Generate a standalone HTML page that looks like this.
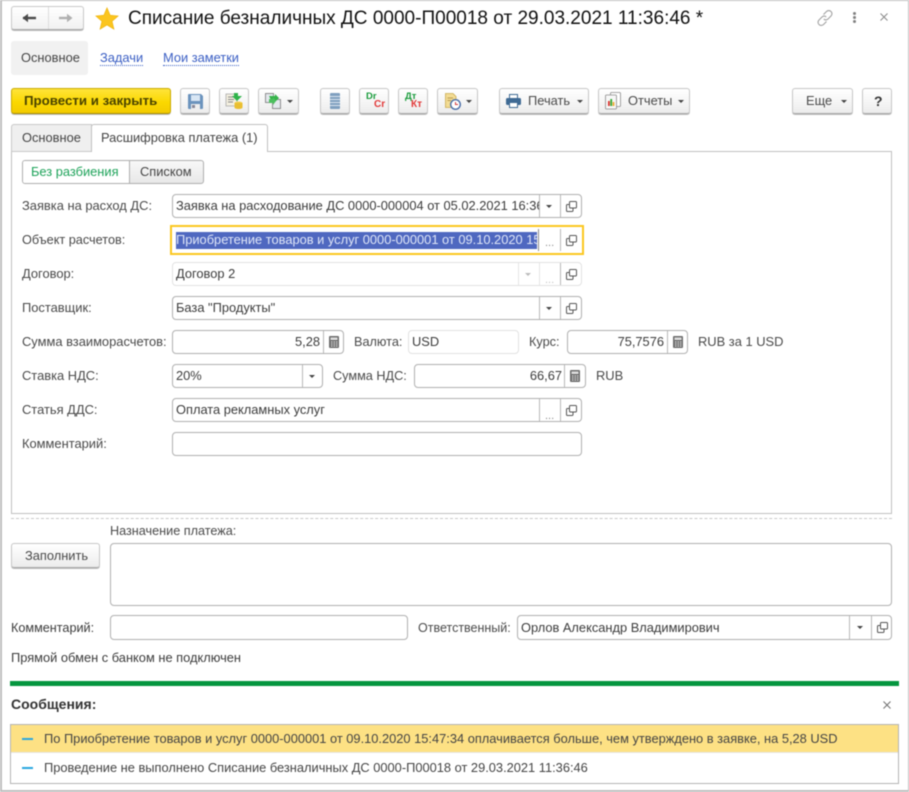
<!DOCTYPE html>
<html lang="ru"><head><meta charset="utf-8"><title>Списание</title>
<style>
*{box-sizing:border-box}
html,body{margin:0;padding:0;background:#fff}
body{width:909px;height:792px;position:relative;overflow:hidden;font:12.85px/16px "Liberation Sans",Arial,sans-serif;color:#3c3c3c;filter:blur(.4px)}
.a{position:absolute;white-space:nowrap}
.l{position:absolute;white-space:nowrap;color:#4a4a4a;height:16px;font-size:12.9px}
.btn{position:absolute;top:88px;height:26px;border:1px solid #c6c6c6;border-bottom:1px solid #a8a8a8;border-radius:3px;background:linear-gradient(#fff,#f4f4f4 60%,#ececec);box-shadow:0 1px 0 #bdbdbd}
.btn span.t{position:absolute;top:4px;white-space:nowrap;color:#4a4a4a}
.f{position:absolute;height:24px;border:1px solid #b0b0b0;border-radius:4px;background:#fff}
.f.dis{border-color:#e2e2e2}
.f .v{position:absolute;left:3px;top:3px;white-space:nowrap;overflow:hidden;color:#3c3c3c}
.f .r{left:auto;right:4px;text-align:right}
.d{position:absolute;top:0;bottom:0;width:1px;background:#b8b8b8}
.arr{position:absolute;width:0;height:0;border:3px solid transparent;border-top:3px solid #444;border-bottom:0}
.dots{position:absolute;color:#8a8a8a;font-size:11px;line-height:10px;letter-spacing:0}
svg{position:absolute;overflow:visible}
</style></head><body>

<!-- outer frame -->
<div class="a" style="left:0;top:0;width:909px;height:792px;border:1px solid #bfbfbf;border-left-width:2px;border-top-width:1px;border-bottom-width:2px"></div>

<!-- nav -->
<div class="a" style="left:11px;top:6px;width:73px;height:24px;border:1px solid #c8c8c8;border-bottom-color:#a8a8a8;border-radius:3px;background:linear-gradient(#fff,#f1f1f1);box-shadow:0 1px 0 #bbb"></div>
<div class="a" style="left:48px;top:7px;width:1px;height:22px;background:#ddd"></div>
<svg style="left:22px;top:13px" width="16" height="10"><path d="M1 5H14" stroke="#4a4a4a" stroke-width="2.4"/><path d="M0.5 5L6 0.8V9.2Z" fill="#4a4a4a"/></svg>
<svg style="left:58px;top:13px" width="16" height="10"><path d="M1 5H13" stroke="#b0b0b0" stroke-width="2.4"/><path d="M14.5 5L9 0.8V9.2Z" fill="#b0b0b0"/></svg>
<svg style="left:95px;top:7px" width="24" height="23" viewBox="0 0 24 23"><path d="M12 .8L15.2 8.2 23.2 9 17.1 14.3 19 22.2 12 18 5 22.2 6.9 14.3 .8 9 8.8 8.2Z" fill="#fbc51f" stroke="#eeb208" stroke-width=".6"/></svg>
<div class="a" style="left:128px;top:8px;font-size:19.03px;line-height:22px;color:#111">Списание безналичных ДС 0000-П00018 от 29.03.2021 11:36:46 *</div>

<!-- header right icons -->
<svg style="left:816px;top:9px" width="18" height="18" viewBox="0 0 18 18" fill="none" stroke="#a0a0a0" stroke-width="1.1"><path d="M7.5 5.5L10.5 2.5C11.7 1.3 13.7 1.2 15 2.5 16.3 3.8 16.2 5.8 15 7L12 10C10.8 11.2 8.8 11.2 7.8 10"/><path d="M10.5 12.5L7.5 15.5C6.3 16.7 4.3 16.8 3 15.5 1.7 14.2 1.8 12.2 3 11L6 8C7.2 6.8 9.2 6.8 10.2 8"/></svg>
<div class="a" style="left:853px;top:12px;width:3px;height:3px;background:#808080;border-radius:50%"></div>
<div class="a" style="left:853px;top:16px;width:3px;height:3px;background:#808080;border-radius:50%"></div>
<div class="a" style="left:853px;top:20px;width:3px;height:3px;background:#808080;border-radius:50%"></div>
<svg style="left:880px;top:13px" width="8" height="8"><path d="M.5 .5L7.5 7.5M7.5 .5L.5 7.5" stroke="#8a8a8a" stroke-width="1"/></svg>

<!-- section tabs -->
<div class="a" style="left:11px;top:41px;width:77px;height:34px;background:#f1f1f1;border-radius:3px"></div>
<div class="a" style="left:21px;top:50px;color:#444">Основное</div>
<div class="a" style="left:100px;top:50px;color:#3b5fc4;border-bottom:1px dotted #3b5fc4;line-height:15px">Задачи</div>
<div class="a" style="left:163px;top:50px;color:#3b5fc4;border-bottom:1px dotted #3b5fc4;line-height:15px">Мои заметки</div>

<!-- command bar -->
<div class="btn" style="left:11px;width:160px;background:linear-gradient(#ffe43a,#fbd800 55%,#f3cb00);border-color:#c9a900;border-bottom-color:#a88e00"><span class="t" style="left:12px;color:#4a4300;font-weight:bold;font-size:13.3px">Провести и закрыть</span></div>

<div class="btn" style="left:180px;width:30px"></div>
<svg style="left:188px;top:94px" width="15" height="15" viewBox="0 0 15 15"><path d="M0 1C0 .4.4 0 1 0H13L15 2V14C15 14.6 14.6 15 14 15H1C.4 15 0 14.6 0 14Z" fill="#6b93bd"/><rect x="3" y="1" width="9" height="6" fill="#d8e6f4"/><rect x="3" y="10" width="9" height="5" fill="#eee"/><rect x="4" y="11" width="3" height="3" fill="#889"/></svg>

<div class="btn" style="left:219px;width:30px"></div>
<svg style="left:226px;top:93px" width="17" height="16" viewBox="0 0 17 16"><rect x="0" y="1" width="11" height="12" fill="#f4f0e0" stroke="#aaa" stroke-width=".8"/><path d="M2 4H8M2 6.5H8M2 9H7" stroke="#888" stroke-width=".9"/><path d="M8 0H12V3H16L11 8 6 3H8Z" fill="#2fb34a"/><ellipse cx="12.5" cy="10" rx="4" ry="1.5" fill="#f3cf4a"/><path d="M8.5 10V14.5C8.5 15.3 10 16 12.5 16S16.5 15.3 16.5 14.5V10Z" fill="#eabf30"/></svg>

<div class="btn" style="left:258px;width:41px"></div>
<svg style="left:265px;top:93px" width="17" height="16" viewBox="0 0 17 16"><rect x=".5" y=".5" width="8" height="9" fill="#e4e8ee" stroke="#777" stroke-width=".8"/><rect x="7.5" y="6.5" width="8" height="9" fill="#e4e8ee" stroke="#777" stroke-width=".8"/><path d="M4 3L10 3 10 1 14 5 10 9 10 7 6 7Z" fill="#35b34a"/><path d="M4 6L8 6 8 4 11 8 8 12 8 10 4 10Z" fill="#4cc05e"/></svg>
<div class="arr" style="left:287px;top:100px"></div>

<div class="btn" style="left:320px;width:30px"></div>
<svg style="left:330px;top:93px" width="10" height="16" viewBox="0 0 10 16"><rect width="10" height="16" rx="1" fill="#7f9fbf"/><path d="M0 3.5H10M0 6.5H10M0 9.5H10M0 12.5H10" stroke="#dbe6f0" stroke-width=".9"/></svg>

<div class="btn" style="left:359px;width:30px"><span class="a" style="left:6px;top:3px;font-size:9.5px;line-height:10px;font-weight:bold;color:#1a9c3c">Dr</span><span class="a" style="left:14px;top:11px;font-size:10px;line-height:10px;font-weight:bold;color:#e23a3a">Cr</span></div>
<div class="btn" style="left:398px;width:30px"><span class="a" style="left:6px;top:3px;font-size:9.5px;line-height:10px;font-weight:bold;color:#1a9c3c">Дт</span><span class="a" style="left:12px;top:11px;font-size:10px;line-height:10px;font-weight:bold;color:#e23a3a">Кт</span></div>

<div class="btn" style="left:437px;width:41px"></div>
<svg style="left:445px;top:93px" width="16" height="17" viewBox="0 0 16 17"><path d="M.5 .5H8L11 3.5V14.5H.5Z" fill="#f3dc94" stroke="#c9aa50" stroke-width=".8"/><path d="M2.5 5H8M2.5 7.5H6" stroke="#b89a50" stroke-width=".9"/><circle cx="10.5" cy="11.5" r="4.8" fill="#fff" stroke="#4b6fa8" stroke-width="1.4"/><path d="M10.5 9V11.5H13" stroke="#d23a3a" stroke-width="1" fill="none"/></svg>
<div class="arr" style="left:466px;top:100px"></div>

<div class="btn" style="left:499px;width:90px"><span class="t" style="left:28px">Печать</span></div>
<svg style="left:506px;top:94px" width="15" height="14" viewBox="0 0 15 14"><rect x="3.5" y=".5" width="8" height="4" fill="#fff" stroke="#3f6a94"/><rect x="0" y="4" width="15" height="7" rx="1.5" fill="#3f6a94"/><rect x="3.5" y="8.5" width="8" height="5" fill="#fff" stroke="#3f6a94"/></svg>
<div class="arr" style="left:577px;top:100px"></div>

<div class="btn" style="left:598px;width:92px"><span class="t" style="left:29px">Отчеты</span></div>
<svg style="left:605px;top:92px" width="16" height="18" viewBox="0 0 16 18"><rect x="5.5" y=".5" width="10" height="14" rx="1" fill="#fff" stroke="#8a8a8a" stroke-width=".8"/><rect x=".5" y="3" width="11" height="14" rx="1" fill="#f7f7f7" stroke="#8a8a8a" stroke-width=".8"/><rect x="3" y="9" width="1.8" height="5" fill="#d33"/><rect x="5.3" y="7" width="1.8" height="7" fill="#3a3"/><rect x="7.6" y="10" width="1.8" height="4" fill="#ea3"/></svg>
<div class="arr" style="left:678px;top:100px"></div>

<div class="btn" style="left:792px;width:61px"><span class="t" style="left:13px">Еще</span></div>
<div class="arr" style="left:841px;top:100px"></div>
<div class="btn" style="left:862px;width:30px"><span class="t" style="left:11px;font-weight:bold;color:#333;font-size:14px">?</span></div>

<!-- form tabs -->
<div class="a" style="left:11px;top:151px;width:881px;height:363px;border:1px solid #c0c0c0"></div>
<div class="a" style="left:11px;top:124px;width:81px;height:28px;background:#efefef;border:1px solid #c8c8c8;border-radius:3px 0 0 0"></div>
<div class="a" style="left:22px;top:130px;color:#444">Основное</div>
<div class="a" style="left:91px;top:124px;width:177px;height:28px;background:#fff;border:1px solid #c0c0c0;border-bottom:0;border-radius:3px 3px 0 0"></div>
<div class="a" style="left:101px;top:130px;color:#444">Расшифровка платежа (1)</div>

<!-- toggle -->
<div class="a" style="left:22px;top:160px;width:182px;height:24px;border:1px solid #aeaeae;border-radius:3px;background:linear-gradient(#f8f8f8,#e8e8e8);overflow:hidden"><div class="a" style="left:0;top:0;width:107px;height:22px;background:#fff;border-right:1px solid #aeaeae"></div></div>
<div class="a" style="left:31px;top:164px;color:#1ea35a">Без разбиения</div>
<div class="a" style="left:140px;top:164px;color:#444">Списком</div>

<!-- labels -->
<div class="l" style="left:22px;top:198px">Заявка на расход ДС:</div>
<div class="l" style="left:22px;top:232px;font-size:12.7px">Объект расчетов:</div>
<div class="l" style="left:22px;top:266px">Договор:</div>
<div class="l" style="left:22px;top:300px">Поставщик:</div>
<div class="l" style="left:22px;top:334px">Сумма взаиморасчетов:</div>
<div class="l" style="left:22px;top:368px">Ставка НДС:</div>
<div class="l" style="left:22px;top:402px">Статья ДДС:</div>
<div class="l" style="left:22px;top:436px">Комментарий:</div>

<!-- row 1 -->
<div class="f" style="left:172px;top:194px;width:410px"><div class="v" style="width:363px;left:3px">Заявка на расходование ДС 0000-000004 от 05.02.2021 16:36:15</div><div class="d" style="left:366px"></div><div class="d" style="left:387px"></div></div>
<div class="arr" style="left:546px;top:205px"></div>
<svg style="left:566px;top:201px" width="11" height="11" viewBox="0 0 11 11" fill="none" stroke="#555" stroke-width="1"><rect x="3.5" y=".5" width="7" height="6.5" rx="1"/><path d="M3.5 3.5H1.5C.9 3.5.5 3.9.5 4.5V9.5C.5 10.1.9 10.5 1.5 10.5H6C6.6 10.5 7 10.1 7 9.5V7"/></svg>

<!-- row 2 focus -->
<div class="a" style="left:170px;top:225px;width:414px;height:30px;border:2px solid #fbc720;background:#fff"></div>
<div class="a" style="left:176px;top:232px;width:361px;height:17px;background:#4f68c0;color:#dfe6f8;overflow:hidden;line-height:16px">Приобретение товаров и услуг 0000-000001 от 09.10.2020 15:47:34</div>
<div class="d" style="left:538px;top:229px;bottom:auto;height:22px;background:#8a8a8a"></div>
<div class="d" style="left:560px;top:229px;bottom:auto;height:22px;background:#b8b8b8"></div>
<div class="dots" style="left:545px;top:238px">...</div>
<svg style="left:566px;top:235px" width="11" height="11" viewBox="0 0 11 11" fill="none" stroke="#555" stroke-width="1"><rect x="3.5" y=".5" width="7" height="6.5" rx="1"/><path d="M3.5 3.5H1.5C.9 3.5.5 3.9.5 4.5V9.5C.5 10.1.9 10.5 1.5 10.5H6C6.6 10.5 7 10.1 7 9.5V7"/></svg>

<!-- row 3 -->
<div class="f dis" style="left:172px;top:262px;width:410px"><div class="v">Договор 2</div><div class="d" style="left:345px;background:#e6e6e6"></div><div class="d" style="left:366px;background:#e6e6e6"></div><div class="d" style="left:387px;background:#b8b8b8"></div></div>
<div class="arr" style="left:525px;top:273px;border-top-color:#bbb"></div>
<div class="dots" style="left:545px;top:275px;color:#c4c4c4">...</div>
<svg style="left:566px;top:269px" width="11" height="11" viewBox="0 0 11 11" fill="none" stroke="#555" stroke-width="1"><rect x="3.5" y=".5" width="7" height="6.5" rx="1"/><path d="M3.5 3.5H1.5C.9 3.5.5 3.9.5 4.5V9.5C.5 10.1.9 10.5 1.5 10.5H6C6.6 10.5 7 10.1 7 9.5V7"/></svg>

<!-- row 4 -->
<div class="f" style="left:172px;top:296px;width:410px"><div class="v">База "Продукты"</div><div class="d" style="left:366px"></div><div class="d" style="left:387px"></div></div>
<div class="arr" style="left:546px;top:307px"></div>
<svg style="left:566px;top:303px" width="11" height="11" viewBox="0 0 11 11" fill="none" stroke="#555" stroke-width="1"><rect x="3.5" y=".5" width="7" height="6.5" rx="1"/><path d="M3.5 3.5H1.5C.9 3.5.5 3.9.5 4.5V9.5C.5 10.1.9 10.5 1.5 10.5H6C6.6 10.5 7 10.1 7 9.5V7"/></svg>

<!-- row 5 -->
<div class="f" style="left:172px;top:330px;width:172px"><div class="v r" style="right:23px">5,28</div><div class="d" style="left:150px"></div></div>
<svg style="left:329px;top:336px" width="10" height="12" viewBox="0 0 10 12"><rect width="10" height="12" rx="1" fill="#6e6e6e"/><rect x="1.5" y="1.5" width="7" height="2.5" fill="#ddd"/><path d="M2 6H3.5M4.5 6H6M7 6H8.5M2 8H3.5M4.5 8H6M7 8H8.5M2 10H3.5M4.5 10H6M7 10H8.5" stroke="#e8e8e8" stroke-width="1"/></svg>
<div class="l" style="left:354px;top:334px;font-size:12.7px">Валюта:</div>
<div class="f dis" style="left:408px;top:330px;width:111px"><div class="v">USD</div></div>
<div class="l" style="left:529px;top:334px;font-size:12.7px">Курс:</div>
<div class="f" style="left:567px;top:330px;width:121px"><div class="v r" style="right:23px">75,7576</div><div class="d" style="left:99px"></div></div>
<svg style="left:673px;top:336px" width="10" height="12" viewBox="0 0 10 12"><rect width="10" height="12" rx="1" fill="#6e6e6e"/><rect x="1.5" y="1.5" width="7" height="2.5" fill="#ddd"/><path d="M2 6H3.5M4.5 6H6M7 6H8.5M2 8H3.5M4.5 8H6M7 8H8.5M2 10H3.5M4.5 10H6M7 10H8.5" stroke="#e8e8e8" stroke-width="1"/></svg>
<div class="l" style="left:698px;top:334px">RUB за 1 USD</div>

<!-- row 6 -->
<div class="f" style="left:172px;top:364px;width:151px"><div class="v">20%</div><div class="d" style="left:129px"></div></div>
<div class="arr" style="left:309px;top:375px"></div>
<div class="l" style="left:333px;top:368px;font-size:12.7px">Сумма НДС:</div>
<div class="f" style="left:414px;top:364px;width:172px"><div class="v r" style="right:23px">66,67</div><div class="d" style="left:149px"></div></div>
<svg style="left:570px;top:370px" width="10" height="12" viewBox="0 0 10 12"><rect width="10" height="12" rx="1" fill="#6e6e6e"/><rect x="1.5" y="1.5" width="7" height="2.5" fill="#ddd"/><path d="M2 6H3.5M4.5 6H6M7 6H8.5M2 8H3.5M4.5 8H6M7 8H8.5M2 10H3.5M4.5 10H6M7 10H8.5" stroke="#e8e8e8" stroke-width="1"/></svg>
<div class="l" style="left:596px;top:368px">RUB</div>

<!-- row 7 -->
<div class="f" style="left:172px;top:398px;width:410px"><div class="v">Оплата рекламных услуг</div><div class="d" style="left:366px"></div><div class="d" style="left:387px"></div></div>
<div class="dots" style="left:545px;top:411px">...</div>
<svg style="left:566px;top:405px" width="11" height="11" viewBox="0 0 11 11" fill="none" stroke="#555" stroke-width="1"><rect x="3.5" y=".5" width="7" height="6.5" rx="1"/><path d="M3.5 3.5H1.5C.9 3.5.5 3.9.5 4.5V9.5C.5 10.1.9 10.5 1.5 10.5H6C6.6 10.5 7 10.1 7 9.5V7"/></svg>

<!-- row 8 -->
<div class="f" style="left:172px;top:432px;width:410px"></div>

<!-- bottom -->
<div class="a" style="left:11px;top:518px;width:881px;border-top:1px dashed #c8c8c8"></div>
<div class="l" style="left:110px;top:523px;font-size:12.65px">Назначение платежа:</div>
<div class="btn" style="left:11px;top:543px;width:89px;height:25px"><span class="t" style="left:13px;top:4px">Заполнить</span></div>
<div class="f" style="left:110px;top:543px;width:782px;height:63px"></div>
<div class="l" style="left:11px;top:620px;color:#3c3c3c;font-size:12.65px">Комментарий:</div>
<div class="f" style="left:110px;top:615px;width:298px;height:25px"></div>
<div class="l" style="left:418px;top:620px;font-size:12.5px">Ответственный:</div>
<div class="f" style="left:517px;top:615px;width:375px;height:25px"><div class="v" style="top:4px">Орлов Александр Владимирович</div><div class="d" style="left:331px"></div><div class="d" style="left:353px"></div></div>
<div class="arr" style="left:857px;top:626px"></div>
<svg style="left:877px;top:622px" width="11" height="11" viewBox="0 0 11 11" fill="none" stroke="#555" stroke-width="1"><rect x="3.5" y=".5" width="7" height="6.5" rx="1"/><path d="M3.5 3.5H1.5C.9 3.5.5 3.9.5 4.5V9.5C.5 10.1.9 10.5 1.5 10.5H6C6.6 10.5 7 10.1 7 9.5V7"/></svg>
<div class="l" style="left:11px;top:650px;color:#3c3c3c;font-size:12.85px">Прямой обмен с банком не подключен</div>

<!-- messages -->
<div class="a" style="left:10px;top:681px;width:889px;height:5px;background:#05963f"></div>
<div class="a" style="left:11px;top:696px;font-weight:bold;font-size:14px;color:#333">Сообщения:</div>
<svg style="left:883px;top:701px" width="8" height="8"><path d="M.5 .5L7.5 7.5M7.5 .5L.5 7.5" stroke="#707070" stroke-width="1"/></svg>
<div class="a" style="left:10px;top:724px;width:889px;height:60px;border:1px solid #b4b4b4;background:#fff"></div>
<div class="a" style="left:11px;top:725px;width:887px;height:27px;background:#fde184"></div>
<div class="a" style="left:11px;top:752px;width:887px;height:1px;background:#e6e6e6"></div>
<div class="a" style="left:22px;top:738px;width:11px;height:2px;background:#2aa7e0"></div>
<div class="a" style="left:22px;top:767px;width:11px;height:2px;background:#2aa7e0"></div>
<div class="a" style="left:44px;top:731px;color:#444">По Приобретение товаров и услуг 0000-000001 от 09.10.2020 15:47:34 оплачивается больше, чем утверждено в заявке, на 5,28 USD</div>
<div class="a" style="left:44px;top:760px;color:#444">Проведение не выполнено Списание безналичных ДС 0000-П00018 от 29.03.2021 11:36:46</div>
</body></html>
